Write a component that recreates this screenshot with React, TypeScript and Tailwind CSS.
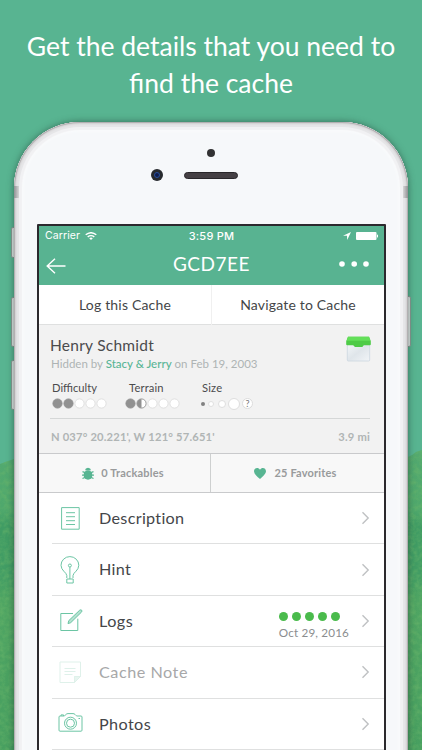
import React from "react";

type RowProps = {
  label: string;
  icon: React.ReactNode;
  labelClass: string;
  children?: React.ReactNode;
};

function Chevron() {
  return (
    <svg className="h-[14px] w-[9px] shrink-0" viewBox="0 0 9 14" fill="none" stroke="#bfc1c3" strokeWidth="1.400">
      <path d="M1.500 1.200 7.200 7l-5.700 5.800" />
    </svg>
  );
}

function Row({ label, icon, labelClass, children }: RowProps) {
  return (
    <div className="flex h-[51.4px] shrink-0 pl-[13px]">
      <div className="flex flex-1 items-center border-b border-[#dfe0e0] pr-[14px]">
        <span className="flex w-[47px] shrink-0 items-center">{icon}</span>
        <span className={labelClass}>{label}</span>
        <span className="flex-1" />
        {children}
        <Chevron />
      </div>
    </div>
  );
}

function Dot({ kind }: { kind: "full" | "half" | "empty" }) {
  return (
    <svg className="h-[11px] w-[11px] shrink-0" viewBox="0 0 11 11">
      <circle cx="5.500" cy="5.500" r="4.600" fill={kind === "full" ? "#919191" : "#fff"} stroke={kind === "empty" ? "#dcdcdc" : "#919191"} strokeWidth=".9" />
      {kind === "half" && <path d="M5.500 1a4.500 4.500 0 0 0 0 9z" fill="#919191" />}
    </svg>
  );
}

const iconStroke = { fill: "none", stroke: "#6cc5a4", strokeWidth: 1 };

function DocIcon() {
  return (
    <svg className="ml-[9px] h-[23px] w-[19px]" viewBox="0 0 19 23" {...iconStroke}>
      <path d="M.6.6h17.600v21.600H.6zM5 5.700h9M5 9.700h9M5 13.700h9M5 17.500h9" />
    </svg>
  );
}

function BulbIcon() {
  return (
    <svg className="ml-[8px] h-[28px] w-[20px]" viewBox="0 0 20 28" {...iconStroke}>
      <path d="M6.800 22v-2.500C6.600 16.500 1 14.500 1 9.300a8.900 8.700 0 0 1 17.800 0c0 5.200-5.600 7.200-5.800 10.200V22M6.800 23h6.400v4H6.800zM9.900 11v12" />
      <circle cx="9.900" cy="9.500" r="1.500" />
    </svg>
  );
}

function EditIcon() {
  return (
    <svg className="ml-[8px] h-[23px] w-[23px]" viewBox="0 0 23 23" {...iconStroke}>
      <path d="M13 4.500H.8v17h17V9.700" />
      <path d="M8 14.600l.8-3L19.700 1.200q1.300-.8 2 0 .6.9-.3 2L10.700 13.700z" fill="#b5e2d1" />
    </svg>
  );
}

function NoteIcon() {
  return (
    <svg className="ml-[7px] h-[23px] w-[23px]" viewBox="0 0 23 23" fill="none" stroke="#dff1ea" strokeWidth="1">
      <path d="M1 1h20.500v14.500l-6 6H1zM21.500 15.500h-6v6M5.500 7.500h11M5.500 10.500h11M5.500 13.500h8" />
      <path d="M15.500 21.500v-6h6z" fill="#e8f5f0" />
    </svg>
  );
}

function CameraIcon() {
  return (
    <svg className="-mt-[3px] ml-[6px] h-[19px] w-[25px]" viewBox="0 0 25 19" {...iconStroke}>
      <path d="M2 3h4q.7 0 1.200-.8L8 1.400Q8.800.6 10 .6h5q1.200 0 2 .8l.8.8q.5.8 1.200.8h4q1 0 1 1v13.200q0 1-1 1H2q-1 0-1-1V4q0-1 1-1z" />
      <circle cx="12.500" cy="10.200" r="6" />
      <circle cx="12.500" cy="10.200" r="4" />
      <path d="M3 3V1.900h2.500V3M20.500 5.500h1.500" />
    </svg>
  );
}

function Scenery() {
  return (
    <svg className="absolute inset-0 h-[750px] w-[422px]" viewBox="0 0 422 750">
      <defs>
        <filter id="foliage" x="0" y="0" width="100%" height="100%" colorInterpolationFilters="sRGB">
          <feTurbulence type="fractalNoise" baseFrequency=".2" numOctaves="3" seed="4" />
          <feColorMatrix values="0 0 0 0 .43  0 0 0 0 .72  0 0 0 0 .42  0 2 0 0 -.7" />
          <feComposite in2="SourceGraphic" operator="in" />
        </filter>
        <linearGradient id="hill" x1="0" y1="0" x2="0" y2="1">
          <stop stopColor="#52a970" />
          <stop offset=".2" stopColor="#4fa86c" />
          <stop offset=".25" stopColor="#409c64" />
          <stop offset=".42" stopColor="#429d64" />
          <stop offset=".5" stopColor="#4fa563" />
          <stop offset="1" stopColor="#479f60" />
        </linearGradient>
      </defs>
      <path d="M0 464 8 461l6-2 390 0 8-4 4-3 6-2v300H0z" fill="url(#hill)" />
      <path d="M0 464 8 461l6-2 390 0 8-4 4-3 6-2v300H0z" filter="url(#foliage)" opacity=".5" />
    </svg>
  );
}

export default function App() {
  return (
    <main className="relative h-[750px] w-[422px] overflow-hidden bg-[#58b491] font-['Lato','Liberation_Sans',sans-serif]">
      <Scenery />
      <h1 className="relative h-[122px] whitespace-nowrap pt-[28px] text-center text-[26.500px] leading-[36.500px] text-white">
        Get the details that you need to
        <br />
        find the cache
      </h1>

      {/* side buttons sit just outside the shell */}
      <i className="absolute left-[11px] top-[227px] h-[31px] w-[5px] rounded-[2px] border border-[#8b9b94] bg-[#e5e7e7]" />
      <i className="absolute left-[11px] top-[297px] h-[50px] w-[5px] rounded-[2px] border border-[#8b9b94] bg-[#e5e7e7]" />
      <i className="absolute left-[11px] top-[360px] h-[50px] w-[5px] rounded-[2px] border border-[#8b9b94] bg-[#e5e7e7]" />
      <i className="absolute left-[406px] top-[296px] h-[51px] w-[5px] rounded-[2px] border border-[#8b9b94] bg-[#e5e7e7]" />

      <section className="relative ml-[14px] h-[700px] w-[394px] rounded-t-[66px] bg-[#f6f8fa] pl-[23px] shadow-[0_0_7px_rgba(30,60,50,0.6),inset_0_0_0_1px_#b3b0b2,inset_0_0_2px_2px_#cfcdcf,inset_0_0_0_5px_#e6e6e8,inset_0_0_1px_8px_#f1f1f3,inset_0_0_3px_9px_#fbfcfd]">
        <i className="absolute left-0 top-[64px] h-[12px] w-[5px] bg-gradient-to-r from-[#929194] to-[#d7d7d8]" />
        <i className="absolute right-0 top-[64px] h-[12px] w-[5px] bg-gradient-to-l from-[#929194] to-[#d7d7d8]" />
        <i className="absolute left-[193px] top-[27px] h-[8px] w-[8px] rounded-full bg-[#323233]" />
        <i className="absolute left-[137px] top-[47px] flex h-[12px] w-[12px] items-center justify-center rounded-full bg-[#272a2e]">
          <b className="h-[6px] w-[6px] rounded-full border border-[#254f9d] bg-[#101c4b]" />
        </i>
        <i className="absolute left-[170px] top-[50px] h-[7px] w-[54px] rounded-full border border-[#29272a] bg-[#454044]" />
        <div className="h-[102px]" />

        <div className="flex h-[600px] w-[349px] flex-col rounded-[1px] border-2 border-[#2b292d] bg-white">
          <header className="h-[59px] shrink-0 bg-[#58b391] text-white">
            <div className="grid h-[20px] grid-cols-3 items-center px-[6px] font-['Inter',sans-serif] text-[10.500px] leading-[20px]">
              <span className="flex items-center gap-[5px] tracking-[0.100px]">
                Carrier
                <svg className="h-[8px] w-[12px]" viewBox="0 0 12 8" fill="none" stroke="white" strokeWidth="1.400">
                  <path d="M.7 2.800Q6-1.400 11.300 2.800M2.700 4.900q3.300-2.600 6.600 0" />
                  <path d="M4.200 6.200q1.800-1.400 3.600 0L6 8z" fill="white" stroke="none" />
                </svg>
              </span>
              <span className="whitespace-nowrap text-center text-[11px] font-medium tracking-[0.250px]">3:59 PM</span>
              <span className="flex items-center justify-end gap-[5px]">
                <svg className="h-[8px] w-[8px]" viewBox="0 0 8 8" fill="white"><path d="M8 0 0 3.800h4L4.200 8z" /></svg>
                <svg className="h-[8px] w-[22px]" viewBox="0 0 22 8" fill="white">
                  <rect width="20.500" height="8" rx="1" />
                  <path d="M21 2.500q1.200 0 1.200 1.500T21 5.500z" />
                </svg>
              </span>
            </div>
            <div className="grid h-[36px] grid-cols-3 items-center px-[7px]">
              <svg className="mt-[4px] h-[16px] w-[20px]" viewBox="0 0 20 16" fill="none" stroke="white" strokeWidth="1.400"><path d="M9 .8 1.200 8 9 15.200M1.200 8H19.500" /></svg>
              <span className="text-center text-[19px] leading-[36px] tracking-[0.500px]">GCD7EE</span>
              <svg className="mr-[8px] h-[6px] w-[30px] justify-self-end" viewBox="0 0 30 6" fill="white"><circle cx="3" cy="3" r="2.800" /><circle cx="15.200" cy="3" r="2.800" /><circle cx="27" cy="3" r="2.800" /></svg>
            </div>
          </header>

          <nav className="grid h-[40px] shrink-0 grid-cols-[173px_172px] border-b border-[#dfe0e0] text-center text-[14px] leading-[40px] tracking-[0.180px] text-[#444648]">
            <span className="border-r border-[#f0f0f0]">Log this Cache</span>
            <span>Navigate to Cache</span>
          </nav>

          <article className="h-[129px] shrink-0 border-b border-[#c9cacc] bg-[#f2f2f2] pl-[11px] pr-[13px]">
            <div className="flex h-[53px] justify-between">
              <div>
                <h2 className="pt-[9px] text-[15.500px] leading-[23px] tracking-[0.250px] text-[#4b4b4d]">Henry Schmidt</h2>
                <p className="ml-[1px] text-[11.500px] leading-[14px] text-[#aeb4b4]">
                  Hidden by <b className="font-medium text-[#58b595]">Stacy &amp; Jerry</b> on Feb 19, 2003
                </p>
              </div>
              <svg className="mt-[11px] h-[26px] w-[25px]" viewBox="0 0 25 26">
                <defs><linearGradient id="tub" x1="0" y1="0" x2="1" y2="1"><stop stopColor="#f5f8fa" /><stop offset=".5" stopColor="#dfe5ea" /><stop offset="1" stopColor="#f1f4f7" /></linearGradient></defs>
                <path d="M1.300 7h22.400v17q0 1-1 1H2.300q-1 0-1-1z" fill="url(#tub)" stroke="#cbd7e0" strokeWidth=".8" />
                <path d="M2 .8h21l1.800 4.500v3q0 1-1 1h-6l-1.500 1.700H9L7.200 9.300h-6q-1 0-1-1v-3z" fill="#4ecb47" />
                <path d="M2 .8h21l1.500 4H.6z" fill="#63df59" />
              </svg>
            </div>
            <div className="mr-[1px] flex h-[41px] border-b border-[#d5d7d7] pt-[3px] text-[11.200px] leading-[13px] text-[#4b4b4d]">
              <div className="w-[75px] pl-[2px]">
                Difficulty
                <div className="mt-[4px] flex"><Dot kind="full" /><Dot kind="full" /><Dot kind="empty" /><Dot kind="empty" /><Dot kind="empty" /></div>
              </div>
              <div className="w-[75px]">
                <span className="ml-[4px] tracking-[0.150px]">Terrain</span>
                <div className="mt-[4px] flex"><Dot kind="full" /><Dot kind="half" /><Dot kind="empty" /><Dot kind="empty" /><Dot kind="empty" /></div>
              </div>
              <div>
                <span className="ml-[2px] tracking-[0.200px]">Size</span>
                <div className="mt-[4px] flex h-[11px] items-center">
                  <i className="ml-px h-[4px] w-[4px] rounded-full bg-[#818181]" />
                  <i className="ml-[3px] h-[6px] w-[6px] rounded-full border border-[#e0e0e0] bg-white" />
                  <i className="ml-[4px] h-[8px] w-[8px] rounded-full border border-[#dedede] bg-white" />
                  <i className="ml-[2px] h-[12px] w-[12px] rounded-full border border-[#dedede] bg-white" />
                  <span className="ml-[2px] flex h-[11px] w-[11px] items-center justify-center rounded-full border border-[#dcdcdc] bg-white text-[9px] leading-[9px] text-[#777]">?</span>
                </div>
              </div>
            </div>
            <div className="mr-[1px] flex justify-between pl-[1px] text-[11.200px] font-bold leading-[36px] tracking-[0.180px] text-[#b0b5b5]">
              <span>N 037° 20.221', W 121° 57.651'</span>
              <span>3.9 mi</span>
            </div>
          </article>

          <div className="grid h-[39px] shrink-0 grid-cols-[172px_173px] border-b border-[#c9cacc] bg-[#f8f8f8] text-[11px] font-bold tracking-[0.180px] text-[#999b9c]">
            <span className="flex items-center justify-center gap-[7px] border-r border-[#ced0d0] pr-[3px]">
              <svg className="h-[13px] w-[12px]" viewBox="0 0 12 13" fill="none" stroke="#58b592" strokeWidth="1.300">
                <ellipse cx="6" cy="8" rx="4.400" ry="4.700" fill="#58b592" stroke="none" />
                <path d="M3 3.300Q3.300.8 6 .8t3 2.500z" fill="#58b592" stroke="none" />
                <path d="M.5 4.700 3 5.500h6l2.500-.8M0 8.200h12M.5 11.500 3 10.500h6l2.500 1" />
              </svg>
              0 Trackables
            </span>
            <span className="flex items-center justify-center gap-[8px] pr-[4px]">
              <svg className="h-[11px] w-[12px]" viewBox="0 0 12 11" fill="#58b592"><path d="M6 11Q0 6.500 0 3.300C0-.2 4.300-1.200 6 1.700 7.700-1.200 12-.2 12 3.300 12 6.500 6 11 6 11z" /></svg>
              25 Favorites
            </span>
          </div>

          <Row label="Description" labelClass="text-[16.200px] tracking-[0.300px] text-[#444649]" icon={<DocIcon />} />
          <Row label="Hint" labelClass="text-[16.200px] tracking-[0.300px] text-[#444649]" icon={<BulbIcon />} />
          <Row label="Logs" labelClass="text-[16.200px] tracking-[0.450px] text-[#444649]" icon={<EditIcon />}>
            <div className="mr-[12px] pt-[10px] text-[11.700px] leading-[15px] tracking-[0.150px] text-[#8b8d8f]">
              <div className="mb-[4px] flex gap-[4px]">
                {[0, 1, 2, 3, 4].map((n) => <i key={n} className="h-[9px] w-[9px] rounded-full bg-[#4abb4c]" />)}
              </div>
              Oct 29, 2016
            </div>
          </Row>
          <Row label="Cache Note" labelClass="text-[16.200px] tracking-[0.520px] text-[#a7a8a9]" icon={<NoteIcon />} />
          <Row label="Photos" labelClass="text-[16.200px] tracking-[0.400px] text-[#444649]" icon={<CameraIcon />} />
        </div>
      </section>
    </main>
  );
}
